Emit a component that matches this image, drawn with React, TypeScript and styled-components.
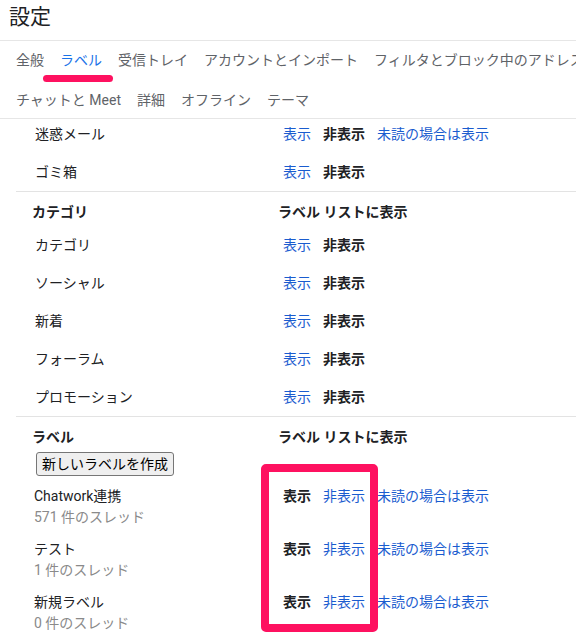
import React from 'react';
import styled, { createGlobalStyle } from 'styled-components';

const GlobalStyle = createGlobalStyle`
    html, body {
        margin: 0;
        padding: 0;
        background: #ffffff;
        overflow: hidden;
    }
    body {
        font-family: Roboto, 'Noto Sans CJK JP', sans-serif;
        color: #202124;
    }
`

const StyledPage = styled.div`
    width: 576px;
    height: 636px;
    overflow: hidden;
    background: #ffffff;
`

const StyledHeader = styled.header`
    height: 41px;
    box-sizing: border-box;
    padding: 4px 0 0 9px;
    border-bottom: 1px solid #e6e6e6;
`

const StyledTitle = styled.h1`
    margin: 0;
    font-size: 21px;
    line-height: 26px;
    font-weight: 400;
    color: #202124;
`

const StyledTabBar = styled.nav`
    display: flex;
    flex-direction: column;
    gap: 20px;
    padding: 9px 0 8px 16px;
    border-bottom: 1px solid #e6e6e6;
`

const StyledTabRow = styled.div`
    display: flex;
    gap: 16px;
    white-space: nowrap;
`

const StyledTab = styled.span<{ $active?: boolean }>`
    position: relative;
    font-size: 14px;
    line-height: 20px;
    color: ${p => (p.$active ? '#1a73e8' : '#5f6368')};
`

const StyledTabMark = styled.span`
    position: absolute;
    top: 25px;
    left: -17px;
    width: 70px;
    height: 7px;
    border-radius: 4px;
    background: #fe1160;
`

const StyledContent = styled.div`
    padding-left: 16px;
    margin-top: -4px;
`

const StyledSection = styled.section<{ $divided?: boolean }>`
    position: relative;
    border-top: ${p => (p.$divided ? '1px solid #e3e3e3' : 'none')};
`

const StyledRow = styled.div<{ $head?: boolean }>`
    display: grid;
    grid-template-columns: 262px 1fr;
    align-items: center;
    height: ${p => (p.$head ? 'auto' : '38px')};
    padding: ${p => (p.$head ? '10px 0 4px' : '0')};
    font-size: 14px;
    line-height: 20px;
`

const StyledName = styled.div<{ $head?: boolean }>`
    padding-left: ${p => (p.$head ? '16px' : '19px')};
    font-weight: ${p => (p.$head ? 700 : 400)};
    color: #202124;
`

const StyledHeadValue = styled.div`
    font-weight: 700;
    color: #202124;
`

const StyledOptions = styled.div`
    display: flex;
    gap: 12px;
    padding-left: 5px;
    white-space: nowrap;
`

const StyledOption = styled.span<{ $active?: boolean }>`
    font-size: 14px;
    line-height: 20px;
    font-weight: ${p => (p.$active ? 700 : 400)};
    color: ${p => (p.$active ? '#202124' : '#1a5ccf')};
    cursor: ${p => (p.$active ? 'default' : 'pointer')};
`

const StyledButtonRow = styled.div`
    padding: 1px 0 0 20px;
`

const StyledButton = styled.button`
    height: 24px;
    padding: 0 5px;
    font-family: Roboto, 'Noto Sans CJK JP', sans-serif;
    font-size: 14px;
    line-height: 20px;
    color: #000000;
    background: #efefef;
    border: 1px solid #767676;
    border-radius: 3px;
`

const StyledLabelList = styled.div`
    position: relative;
`

const StyledLabelItem = styled.div`
    display: grid;
    grid-template-columns: 262px 1fr;
    padding: 10px 0 2px;
    font-size: 14px;
    line-height: 20px;
`

const StyledLabelName = styled.div`
    padding-left: 18px;
    color: #202124;
`

const StyledThreadCount = styled.div`
    margin-top: 1px;
    color: #8a8a8a;
`

const StyledHighlight = styled.div`
    position: absolute;
    top: -12px;
    left: 245px;
    width: 117px;
    height: 168px;
    box-sizing: border-box;
    border: 8px solid #fe1160;
    border-radius: 5px;
    pointer-events: none;
`

const firstTabs = ['全般', 'ラベル', '受信トレイ', 'アカウントとインポート', 'フィルタとブロック中のアドレス', '転送と POP/IMAP']
const secondTabs = ['チャットと Meet', '詳細', 'オフライン', 'テーマ']

const options = ['表示', '非表示', '未読の場合は表示']

type OptionsProps = { active: number, unread?: boolean }

function Options({ active, unread }: OptionsProps) {
    const shown = unread ? options : options.slice(0, 2)
    return (
        <StyledOptions>
            {shown.map((text, i) => (
                <StyledOption key={text} $active={i === active}>{text}</StyledOption>
            ))}
        </StyledOptions>
    )
}

const systemRows = [
    { name: '迷惑メール', unread: true },
    { name: 'ゴミ箱', unread: false },
]

const categoryRows = ['カテゴリ', 'ソーシャル', '新着', 'フォーラム', 'プロモーション']

const labels = [
    { name: 'Chatwork連携', count: '571 件のスレッド' },
    { name: 'テスト', count: '1 件のスレッド' },
    { name: '新規ラベル', count: '0 件のスレッド' },
]

function App() {
    return (
        <>
            <GlobalStyle />
            <StyledPage>
                <StyledHeader>
                    <StyledTitle>設定</StyledTitle>
                </StyledHeader>

                <StyledTabBar>
                    <StyledTabRow>
                        {firstTabs.map(tab => (
                            <StyledTab key={tab} $active={tab === 'ラベル'}>
                                {tab}
                                {tab === 'ラベル' && <StyledTabMark />}
                            </StyledTab>
                        ))}
                    </StyledTabRow>
                    <StyledTabRow>
                        {secondTabs.map(tab => (
                            <StyledTab key={tab}>{tab}</StyledTab>
                        ))}
                    </StyledTabRow>
                </StyledTabBar>

                <StyledContent>
                    <StyledSection>
                        {systemRows.map(row => (
                            <StyledRow key={row.name}>
                                <StyledName>{row.name}</StyledName>
                                <Options active={1} unread={row.unread} />
                            </StyledRow>
                        ))}
                    </StyledSection>

                    <StyledSection $divided>
                        <StyledRow $head>
                            <StyledName $head>カテゴリ</StyledName>
                            <StyledHeadValue>ラベル リストに表示</StyledHeadValue>
                        </StyledRow>
                        {categoryRows.map(name => (
                            <StyledRow key={name}>
                                <StyledName>{name}</StyledName>
                                <Options active={1} />
                            </StyledRow>
                        ))}
                    </StyledSection>

                    <StyledSection $divided>
                        <StyledRow $head>
                            <StyledName $head>ラベル</StyledName>
                            <StyledHeadValue>ラベル リストに表示</StyledHeadValue>
                        </StyledRow>
                        <StyledButtonRow>
                            <StyledButton>新しいラベルを作成</StyledButton>
                        </StyledButtonRow>
                        <StyledLabelList>
                            {labels.map(label => (
                                <StyledLabelItem key={label.name}>
                                    <StyledLabelName>
                                        <div>{label.name}</div>
                                        <StyledThreadCount>{label.count}</StyledThreadCount>
                                    </StyledLabelName>
                                    <Options active={0} unread />
                                </StyledLabelItem>
                            ))}
                            <StyledHighlight />
                        </StyledLabelList>
                    </StyledSection>
                </StyledContent>
            </StyledPage>
        </>
    )
}

export default App;
